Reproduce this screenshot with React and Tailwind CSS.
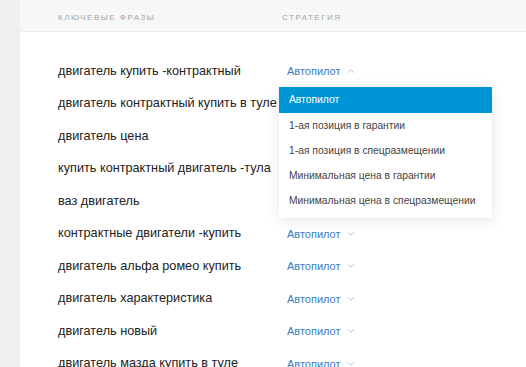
import { ChevronDown, ChevronUp } from "lucide-react";

const phrases = [
  "двигатель купить -контрактный",
  "двигатель контрактный купить в туле",
  "двигатель цена",
  "купить контрактный двигатель -тула",
  "ваз двигатель",
  "контрактные двигатели -купить",
  "двигатель альфа ромео купить",
  "двигатель характеристика",
  "двигатель новый",
  "двигатель мазда купить в туле",
];

const options = [
  "Автопилот",
  "1-ая позиция в гарантии",
  "1-ая позиция в спецразмещении",
  "Минимальная цена в гарантии",
  "Минимальная цена в спецразмещении",
];

function Strategy({ open }) {
  return (
    <div className="flex items-center gap-[5px] text-[11px] text-[#3b7cc4]">
      <span>Автопилот</span>
      {open ? (
        <ChevronUp size={10} strokeWidth={1.5} className="text-[#7f8fa3]" />
      ) : (
        <ChevronDown size={10} strokeWidth={1.5} className="text-[#7f8fa3]" />
      )}
    </div>
  );
}

export default function App() {
  return (
    <div
      className="relative flex h-[367px] w-[526px] overflow-hidden bg-white"
      style={{ fontFamily: '"Liberation Sans", Arial, sans-serif' }}
    >
      <div className="w-[20px] shrink-0 bg-[#efefef]" />
      <div className="flex-1">
        <div className="flex h-[32px] items-center border-b border-[#ececec] bg-[#f7f7f7] pt-[4px] text-[8px] tracking-[1.5px] text-[#a3a3a3]">
          <div className="w-[262px] pl-[38px]">КЛЮЧЕВЫЕ ФРАЗЫ</div>
          <div>СТРАТЕГИЯ</div>
        </div>
        <div className="pt-[23px]">
          {phrases.map((p, i) => (
            <div key={p} className="flex h-[32.5px] items-center">
              <div className="w-[267px] whitespace-nowrap pl-[38px] text-[12.7px] text-[#222]">
                {p}
              </div>
              {(i === 0 || i > 4) && <Strategy open={i === 0} />}
            </div>
          ))}
        </div>
      </div>

      <div className="absolute left-[279px] top-[87px] w-[213px] bg-white pb-[5px] text-[10.3px] text-[#444] shadow-[0_2px_12px_rgba(60,80,110,0.15)]">
        {options.map((o, i) => (
          <div
            key={o}
            className={
              i === 0
                ? "flex h-[26px] items-center bg-[#0096d6] px-[10px] text-white"
                : "flex h-[25px] items-center px-[10px]"
            }
          >
            {o}
          </div>
        ))}
      </div>
    </div>
  );
}
